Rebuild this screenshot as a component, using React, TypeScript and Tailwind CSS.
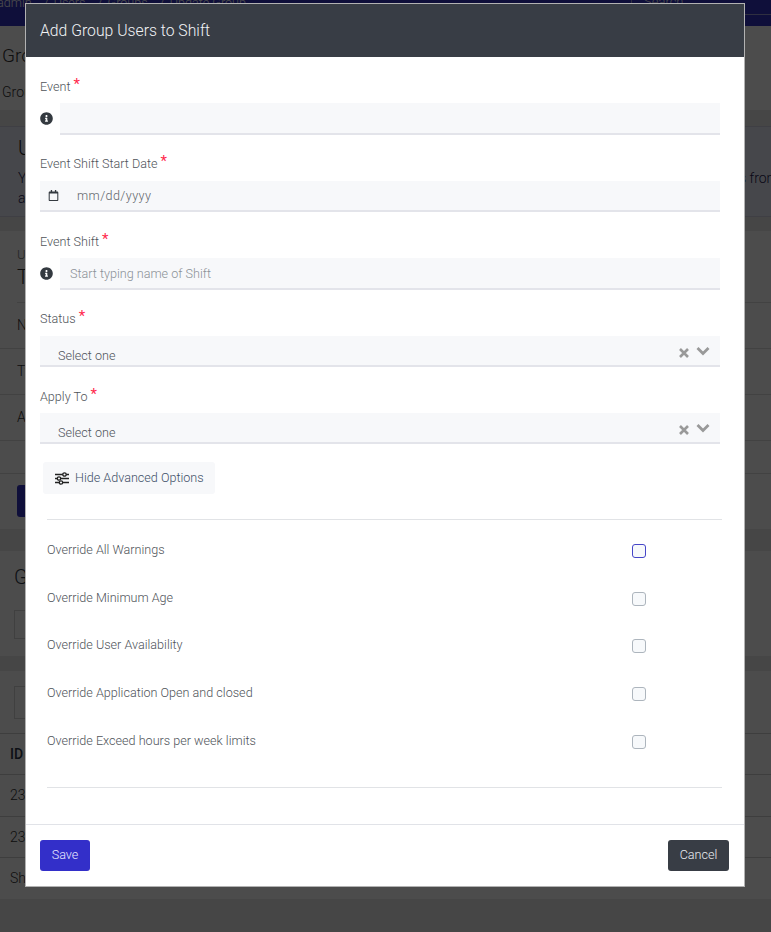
import { FaInfoCircle, FaRegCalendar } from 'react-icons/fa';

const overrides = [
  'Override All Warnings',
  'Override Minimum Age',
  'Override User Availability',
  'Override Application Open and closed',
  'Override Exceed hours per week limits'
];

function Label({ text, className }: { text: string; className: string }) {
  return (
    <div className={`h-[18px] pt-[2px] flex items-center text-[12.6px] text-[#4f545a] ${className}`}>
      <span>{text}</span>
      <span className="ml-[3px] -mt-[5px] text-[15px] font-normal leading-none text-[#ff2a4d]">*</span>
    </div>
  );
}

function SelectField({ className }: { className: string }) {
  return (
    <div className={`h-[31px] pl-[18px] pr-[10px] flex items-end justify-between bg-[#f7f8fa] border-b-2 border-[#e3e4ea] text-[12.6px] text-[#4f545a] ${className}`}>
      <span className="-mb-[1px]">Select one</span>
      <div className="flex items-center gap-[7px] self-center mt-[4px] text-[#999]">
        <svg width="10" height="10" viewBox="0 0 10 10" fill="none" stroke="currentColor" strokeWidth="2.6">
          <path d="M1 1l8 8M9 1l-8 8" />
        </svg>
        <svg width="14" height="10" viewBox="0 0 14 10" fill="none" stroke="currentColor" strokeWidth="2.8" className="-mt-[3px]">
          <path d="M1.5 2l5.5 5.5L12.500 2" />
        </svg>
      </div>
    </div>
  );
}

function PageBehind() {
  return (
    <div className="h-[932px] overflow-hidden bg-[#e9e9e9] text-[#333]">
      <div className="h-[26px] overflow-hidden bg-[#3333c4] text-[12.6px] text-white flex">
        <div className="w-[634px] -mt-[6px] -ml-[3px] flex whitespace-nowrap">
          <span>admin</span>
          <span className="ml-[12px] mr-[5px]">/</span>
          <span>Users</span>
          <span className="ml-[12px] mr-[5px]">/</span>
          <span>Groups</span>
          <span className="ml-[12px] mr-[5px]">/</span>
          <span>Update Group</span>
        </div>
        <div className="flex-1 h-[16px] pl-[12px] -mt-[1px] border-l border-b border-[#9d9dd8] text-[13px]">
          <div className="-mt-[7px]">Search</div>
        </div>
      </div>

      <div className="h-[84px] bg-white pl-[2px] pt-[18px]">
        <div className="text-[19px] leading-[24px]">Groups</div>
        <div className="mt-[14px] text-[14px] leading-[20px]">Group Details</div>
      </div>

      <div className="mt-[16px] h-[91px] overflow-hidden bg-[#eceefb] border-y border-[#d3d4e4] pl-[18px] pt-[8px] text-[#1c1a50]">
        <div className="text-[20px] leading-[26px] text-[#222]">Update Group</div>
        <div className="w-[761px] mt-[7px] flex justify-between text-[14px] leading-[20px]">
          <span>You can change this group</span>
          <span>shifts from</span>
        </div>
        <div className="text-[14px] leading-[20px]">active events.</div>
      </div>

      <div className="mt-[14px] h-[298px] bg-white">
        <div className="h-[72px] ml-[17px] pt-[16px] border-b border-[#dedede]">
          <div className="text-[13px] leading-[16px] text-[#777]">Update</div>
          <div className="text-[20px] leading-[28px]">Team</div>
        </div>
        <div className="h-[46px] pl-[17px] flex items-center border-b border-[#dedede] text-[14px]">Name</div>
        <div className="h-[46px] pl-[17px] flex items-center border-b border-[#dedede] text-[14px]">Type</div>
        <div className="h-[46px] pl-[17px] flex items-center border-b border-[#dedede] text-[14px]">Active</div>
        <div className="h-[33px] border-b border-[#dedede]" />
        <div className="ml-[17px] mt-[11px] w-[80px] h-[32px] rounded-[3px] bg-[#3333c4]" />
      </div>

      <div className="mt-[22px] h-[348px] bg-white">
        <div className="h-[105px] pl-[14px] pt-[13px]">
          <div className="text-[20px] leading-[26px] text-[#2d3748]">Group Users</div>
          <div className="mt-[20px] w-[300px] h-[29px] border border-[#d8d8d8]" />
        </div>
        <div className="h-[15px] bg-[#e9e9e9]" />
        <div className="h-[63px] pl-[14px] pt-[15px] border-b border-[#cfcfcf]">
          <div className="w-[300px] h-[33px] border border-[#d8d8d8]" />
        </div>
        <div className="h-[41px] pl-[10px] flex items-center border-b border-[#cfcfcf] text-[14px] font-medium text-[#2d3748]">ID</div>
        <div className="h-[42px] pl-[10px] flex items-center border-b border-[#cfcfcf] text-[14px]">2345</div>
        <div className="h-[41px] pl-[10px] flex items-center border-b border-[#cfcfcf] text-[14px]">2346</div>
        <div className="h-[41px] pl-[10px] flex items-center text-[14px]">Showing</div>
      </div>
    </div>
  );
}

export default function App() {
  return (
    <div className="h-[932px] overflow-hidden font-['Roboto',sans-serif] font-light">
      <PageBehind />

      <div className="fixed inset-0 bg-black/70">
        <div className="ml-[25px] mt-[3px] w-[720px] h-[884px] flex flex-col bg-white border border-black/30">
          <div className="h-[53px] px-[14px] flex items-center bg-[#383d45] text-[15.75px] text-[#f1f3f5]">
            Add Group Users to Shift
          </div>

          <div className="flex-1 pl-[14px] pr-[24px]">
            <Label text="Event" className="mt-[20px]" />
            <div className="mt-[8px] flex items-center">
              <FaInfoCircle size={13} className="-mt-[2px] mr-[7px] text-[#343a40]" />
              <input className="w-[660px] h-[32px] px-[10px] bg-[#f7f8fa] border-b-2 border-[#e3e4ea] outline-none" />
            </div>

            <Label text="Event Shift Start Date" className="mt-[19px]" />
            <div className="mt-[9px] h-[31px] flex items-center bg-[#f7f8fa] border-b-2 border-[#e3e4ea]">
              <FaRegCalendar size={11} className="ml-[8px] mr-[18px] text-[#343a40]" />
              <input placeholder="mm/dd/yyyy" className="flex-1 pt-[2px] bg-transparent text-[12.6px] tracking-[0.4px] outline-none placeholder:text-[#5f656b]" />
            </div>

            <Label text="Event Shift" className="mt-[20px]" />
            <div className="mt-[8px] flex items-center">
              <FaInfoCircle size={13} className="-mt-[2px] mr-[7px] text-[#343a40]" />
              <input placeholder="Start typing name of Shift" className="w-[660px] h-[32px] px-[10px] bg-[#f7f8fa] border-b-2 border-[#e3e4ea] text-[12.6px] outline-none placeholder:text-[#8b9197]" />
            </div>

            <Label text="Status" className="mt-[19px]" />
            <SelectField className="mt-[9px]" />

            <Label text="Apply To" className="mt-[20px]" />
            <SelectField className="mt-[8px]" />

            <button className="mt-[18px] ml-[3px] w-[172px] h-[32px] pl-[12px] flex items-center gap-[6px] rounded-[3px] bg-[#f7f8fa] text-[12.6px] text-[#3f5068]">
              <svg width="14" height="13" viewBox="0 0 14 13" fill="none" stroke="#222" strokeWidth="1.3">
                <path d="M0 2.500h14M0 6.500h14M0 10.500h14" />
                <circle cx="9.500" cy="2.500" r="1.700" fill="#f7f8fa" />
                <circle cx="4" cy="6.500" r="1.700" fill="#f7f8fa" />
                <circle cx="6" cy="10.500" r="1.700" fill="#f7f8fa" />
              </svg>
              <span>Hide Advanced Options</span>
            </button>

            <div className="mt-[25px] ml-[7px] -mr-[2px] h-[269px] border-y border-[#e1e3e6] pt-[6px]">
              {overrides.map((label, i) => (
                <div key={label} className="h-[47.7px] flex items-center justify-between text-[12.6px] text-[#4f545a]">
                  <span className="pt-[1px]">{label}</span>
                  <input
                    type="checkbox"
                    className={`appearance-none mt-[2px] mr-[76px] w-[14px] h-[14px] rounded-[3px] bg-[#f7f9fb] border ${i === 0 ? 'border-[#4646c8]' : 'border-[#adb5bd]'}`}
                  />
                </div>
              ))}
            </div>
          </div>

          <div className="h-[62px] pl-[14px] pr-[15px] flex items-center justify-between border-t border-[#e1e3e8]">
            <button className="w-[50px] h-[31px] rounded-[3px] bg-[#332fc9] text-[12.6px] text-[#e8e8ff]">Save</button>
            <button className="w-[61px] h-[31px] rounded-[3px] bg-[#383d45] text-[12.6px] text-[#e9ecef]">Cancel</button>
          </div>
        </div>
      </div>
    </div>
  );
}
